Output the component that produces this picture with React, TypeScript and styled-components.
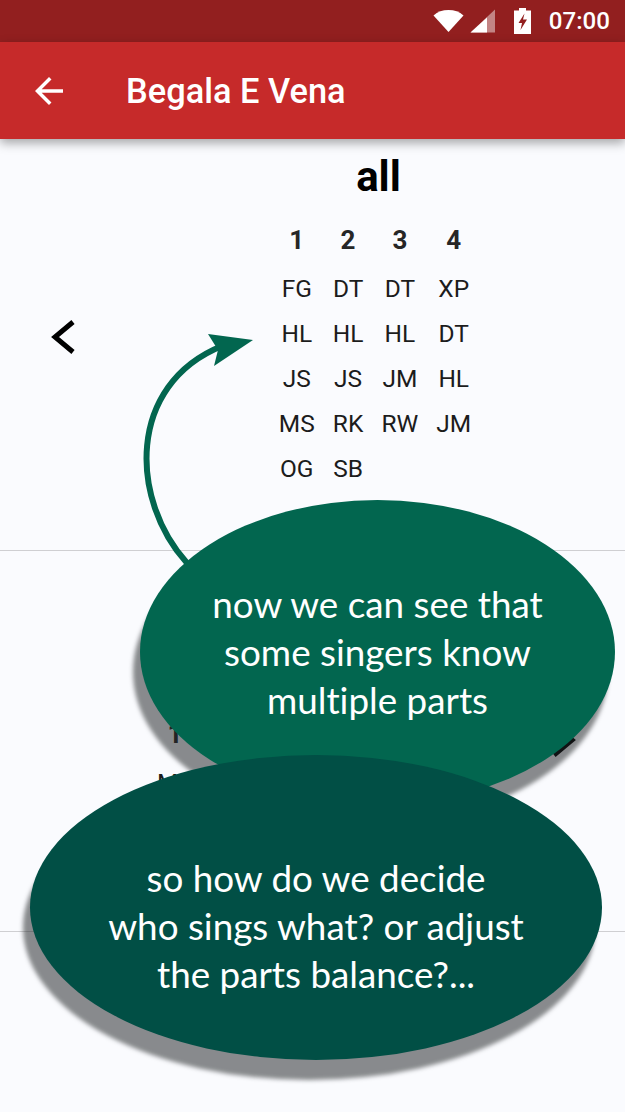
import React from 'react';
import styled, { createGlobalStyle } from 'styled-components';

const GlobalStyle = createGlobalStyle`
  html, body {
    margin: 0;
    padding: 0;
    background: #fafbfe;
  }
  * {
    box-sizing: border-box;
  }
`;

const Screen = styled.div`
  position: relative;
  width: 625px;
  height: 1112px;
  overflow: hidden;
  background: #fafbfe;
  font-family: Roboto, "Liberation Sans", sans-serif;
  color: #1c1c1c;
`;

const StatusBar = styled.div`
  display: flex;
  align-items: center;
  justify-content: flex-end;
  height: 42px;
  padding-right: 15px;
  background: #921f1f;
  color: #fff;
`;

const WifiIcon = styled.svg`
  width: 31px;
  height: 24px;
  margin-right: 6px;
`;

const SignalIcon = styled.svg`
  width: 26px;
  height: 24px;
  margin-right: 18px;
`;

const BatteryIcon = styled.svg`
  width: 17px;
  height: 26px;
  margin-right: 18px;
`;

const Clock = styled.span`
  font-size: 24.1px;
  font-weight: 500;
  line-height: 42px;
`;

const AppBar = styled.header`
  position: relative;
  z-index: 1;
  display: flex;
  align-items: center;
  height: 97px;
  padding-left: 28px;
  background: #c62a2a;
  box-shadow: 0 4px 10px rgba(0, 0, 0, 0.35);
  color: #fff;
`;

const BackIcon = styled.svg`
  width: 42px;
  height: 42px;
  margin-right: 56px;
  fill: #fff;
`;

const Title = styled.h1`
  margin: 0;
  font-size: 34.4px;
  font-weight: 500;
`;

const Section = styled.section<{ $height: number }>`
  display: flex;
  align-items: center;
  height: ${props => props.$height}px;
  border-bottom: 1px solid #cfcfd2;
`;

const Chevron = styled.svg`
  flex: none;
  width: 30px;
  height: 42px;
  fill: none;
  stroke: #000;
  stroke-width: 5;
  margin-bottom: 13px;
  margin-left: 48px;
`;

const ChevronRight = styled(Chevron)`
  margin: 0 46px 0 auto;
`;

const PartsBlock = styled.div`
  flex: 1;
  display: flex;
  flex-direction: column;
  align-items: center;
  margin-top: -3px;
  margin-bottom: 42px;
  margin-left: 54px;
`;

const GroupName = styled.h2`
  margin: 0 0 17px;
  font-size: 42px;
  line-height: 48px;
  font-weight: 700;
  color: #000;
`;

const PartsTable = styled.div`
  display: grid;
  grid-template-columns: repeat(4, auto);
  column-gap: 18px;
  justify-items: center;
  margin-right: 7px;
`;

const PartHead = styled.div`
  font-size: 26px;
  font-weight: 700;
  line-height: 45px;
  margin-bottom: 3px;
  color: #262626;
`;

const Singer = styled.div`
  font-size: 24.5px;
  line-height: 45px;
  color: #1c1c1c;
`;

const SecondColumn = styled.div`
  display: flex;
  flex-direction: column;
  align-items: center;
  margin-left: 157px;
  margin-top: 34px;
`;

const Bubble = styled.div<{ $left: number; $top: number; $width: number; $height: number; $bg: string; $pad: number }>`
  position: absolute;
  z-index: 2;
  left: ${props => props.$left}px;
  top: ${props => props.$top}px;
  width: ${props => props.$width}px;
  height: ${props => props.$height}px;
  padding-top: ${props => props.$pad}px;
  border-radius: 50%;
  display: flex;
  align-items: center;
  justify-content: center;
  text-align: center;
  background: ${props => props.$bg};
  box-shadow: -7px 20px 4px rgba(30, 34, 36, 0.52);
  color: #fff;
  font-family: Lato, "Open Sans", sans-serif;
  font-size: 36.8px;
  font-variant-ligatures: none;
  line-height: 48px;
`;

const PointerArrow = styled.svg`
  position: absolute;
  z-index: 2;
  left: 0;
  top: 300px;
  width: 300px;
  height: 300px;
`;

const partRows = [
  ['FG', 'DT', 'DT', 'XP'],
  ['HL', 'HL', 'HL', 'DT'],
  ['JS', 'JS', 'JM', 'HL'],
  ['MS', 'RK', 'RW', 'JM'],
  ['OG', 'SB', '', ''],
];

export default function App() {
  return (
    <Screen>
      <GlobalStyle />
      <StatusBar>
        <WifiIcon viewBox="0 0 31 24">
          <path d="M0.5 6.5C4.5 2.8 9.7 1 15.5 1s11 1.8 15 5.5L15.5 23z" fill="#fff" />
        </WifiIcon>
        <SignalIcon viewBox="0 0 26 24">
          <path d="M25 0.5V23.5H0.5z" fill="#fff" fillOpacity="0.45" />
          <path d="M17 8.5V23.5H0.5z" fill="#fff" />
        </SignalIcon>
        <BatteryIcon viewBox="0 0 17 26">
          <path
            fillRule="evenodd"
            fill="#fff"
            d="M5 0h7v2.5h5V26H0V2.5h5zM10.5 5.5L4.5 15h3.5l-1.5 7 6.5-10.5H9z"
          />
        </BatteryIcon>
        <Clock>07:00</Clock>
      </StatusBar>
      <AppBar>
        <BackIcon viewBox="0 0 24 24">
          <path d="M20 11H7.83l5.59-5.59L12 4l-8 8 8 8 1.41-1.41L7.83 13H20v-2z" />
        </BackIcon>
        <Title>Begala E Vena</Title>
      </AppBar>

      <Section $height={412}>
        <Chevron viewBox="0 0 30 42">
          <polyline points="25,5 7,20 25,35" />
        </Chevron>
        <PartsBlock>
          <GroupName>all</GroupName>
          <PartsTable>
            {[1, 2, 3, 4].map(part => (
              <PartHead key={part}>{part}</PartHead>
            ))}
            {partRows.flat().map((name, i) => (
              <Singer key={i}>{name}</Singer>
            ))}
          </PartsTable>
        </PartsBlock>
      </Section>

      <Section $height={381}>
        <SecondColumn>
          <PartHead>1</PartHead>
          <Singer>MS</Singer>
        </SecondColumn>
        <ChevronRight viewBox="0 0 30 42">
          <polyline points="5,5 23,20 5,35" />
        </ChevronRight>
      </Section>

      <PointerArrow viewBox="0 300 300 300">
        <path d="M187 563C130 500 126 385 222 346" fill="none" stroke="#02664f" strokeWidth="6" />
        <path d="M253 340L208 334L218 350L214 366z" fill="#02664f" />
      </PointerArrow>

      <Bubble $left={140} $top={500} $width={475} $height={304} $bg="#02664f" $pad={0}>
        <span>
          now we can see that
          <br />
          some singers know
          <br />
          multiple parts
        </span>
      </Bubble>
      <Bubble $left={30} $top={755} $width={572} $height={305} $bg="#014f45" $pad={36}>
        <span>
          so how do we decide
          <br />
          who sings what? or adjust
          <br />
          the parts balance?...
        </span>
      </Bubble>
    </Screen>
  );
}
